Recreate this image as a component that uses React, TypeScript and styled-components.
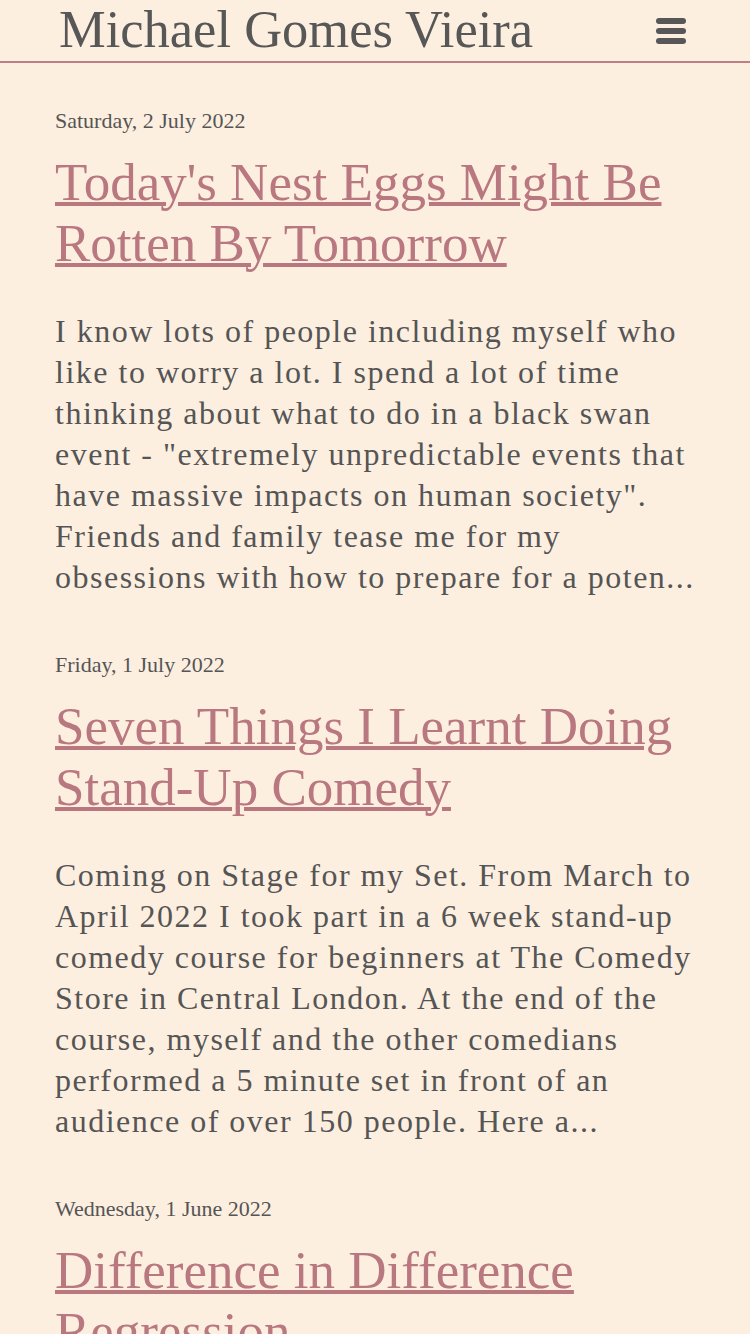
import React from 'react'
import styled, { createGlobalStyle } from 'styled-components'

const GlobalStyle = createGlobalStyle`
  html, body {
    margin: 0;
    padding: 0;
    background: #fdefe0;
  }
  body {
    font-family: "Liberation Serif", "DejaVu Serif", serif;
    color: #555555;
  }
`

const Header = styled.header`
  display: flex;
  align-items: flex-start;
  justify-content: space-between;
  height: 61px;
  padding: 0 64px 0 59px;
  border-bottom: 2px solid #bf7f86;
`

const SiteTitle = styled.div`
  font-family: "Liberation Serif", serif;
  font-size: 52.5px;
  line-height: 59px;
  color: #575757;
  white-space: nowrap;
`

const MenuButton = styled.button`
  align-self: center;
  display: flex;
  flex-direction: column;
  gap: 4px;
  background: none;
  border: 0;
  padding: 0;
  cursor: pointer;
`

const MenuBar = styled.span`
  display: block;
  width: 30px;
  height: 6px;
  border-radius: 3px;
  background: #575757;
`

const Main = styled.main`
  padding: 45px 50px 0 55px;
`

const Post = styled.article`
  margin-bottom: 54px;
`

const PostDate = styled.div`
  font-size: 22px;
  line-height: 26px;
  color: #555555;
  margin-bottom: 18px;
`

const PostTitle = styled.a`
  display: block;
  font-size: 53px;
  line-height: 61px;
  color: #b97780;
  text-decoration: underline;
  text-decoration-thickness: 4px;
  text-underline-offset: 2px;
  margin-bottom: 37px;
`

const Excerpt = styled.p`
  margin: 0;
  font-size: 32px;
  line-height: 41px;
  letter-spacing: 1.5px;
  color: #555555;
`

const posts = [
  {
    date: 'Saturday, 2 July 2022',
    title: "Today's Nest Eggs Might Be Rotten By Tomorrow",
    excerpt:
      'I know lots of people including myself who like to worry a lot. I spend a lot of time thinking about what to do in a black swan event - "extremely unpredictable events that have massive impacts on human society". Friends and family tease me for my obsessions with how to prepare for a poten...',
  },
  {
    date: 'Friday, 1 July 2022',
    title: 'Seven Things I Learnt Doing Stand-Up Comedy',
    excerpt:
      'Coming on Stage for my Set. From March to April 2022 I took part in a 6 week stand-up comedy course for beginners at The Comedy Store in Central London. At the end of the course, myself and the other comedians performed a 5 minute set in front of an audience of over 150 people. Here a...',
  },
  {
    date: 'Wednesday, 1 June 2022',
    title: 'Difference in Difference Regression',
    excerpt: '',
  },
]

export default function App() {
  return (
    <>
      <GlobalStyle />
      <Header>
        <SiteTitle>Michael Gomes Vieira</SiteTitle>
        <MenuButton aria-label="Menu">
          <MenuBar />
          <MenuBar />
          <MenuBar />
        </MenuButton>
      </Header>
      <Main>
        {posts.map((p) => (
          <Post key={p.title}>
            <PostDate>{p.date}</PostDate>
            <PostTitle href="#">{p.title}</PostTitle>
            {p.excerpt && <Excerpt>{p.excerpt}</Excerpt>}
          </Post>
        ))}
      </Main>
    </>
  )
}
